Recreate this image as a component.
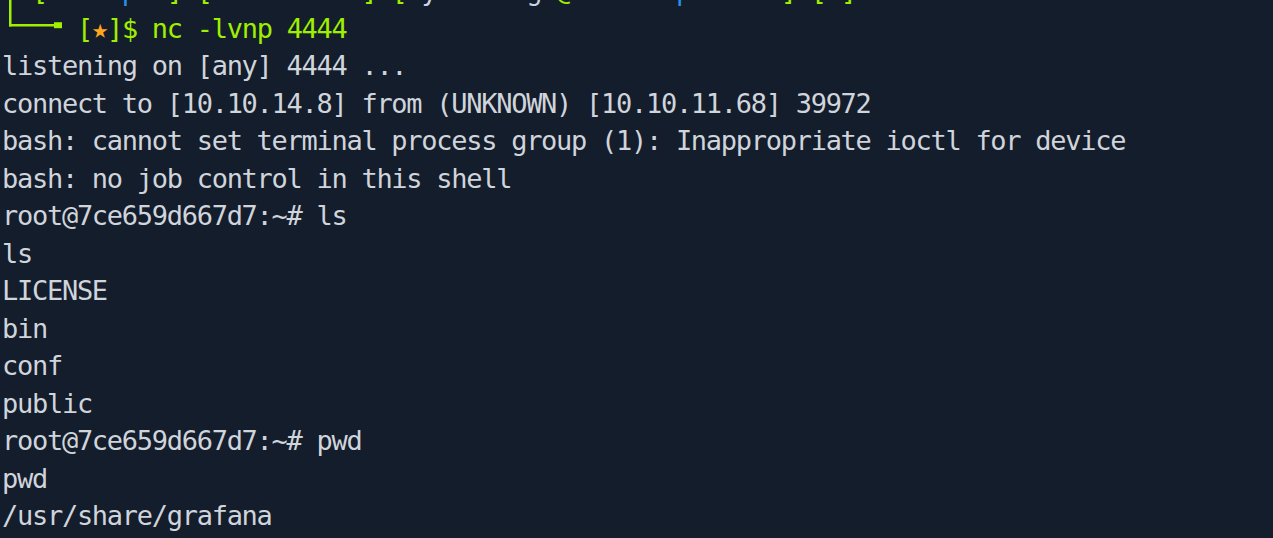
const green = "text-[#9fef00]";
const text = "text-[#d0d4db]";

const lines = [
  "listening on [any] 4444 ...",
  "connect to [10.10.14.8] from (UNKNOWN) [10.10.11.68] 39972",
  "bash: cannot set terminal process group (1): Inappropriate ioctl for device",
  "bash: no job control in this shell",
  "root@7ce659d667d7:~# ls",
  "ls",
  "LICENSE",
  "bin",
  "conf",
  "public",
  "root@7ce659d667d7:~# pwd",
  "pwd",
  "/usr/share/grafana",
];

function Corner() {
  // └──╼ drawn so it joins the prompt line above without gaps
  return (
    <svg
      width="60"
      height="37.5"
      viewBox="0 0 60 37.5"
      className="inline-block align-top overflow-visible"
    >
      <rect x="7" y="-60" width="2.5" height="76.5" fill="#9fef00" />
      <rect x="7" y="14" width="46" height="2.5" fill="#9fef00" />
      <rect x="52" y="12.2" width="8" height="6" fill="#9fef00" />
    </svg>
  );
}

export default function App() {
  return (
    <div className="w-[1273px] h-[538px] overflow-hidden bg-[#141d2b]">
      <div
        className="mt-[-28px] pl-[2px] text-[27px] leading-[37.5px] tracking-[-1.28px] whitespace-pre"
        style={{ fontFamily: '"DejaVu Sans Mono", "Liberation Mono", monospace' }}
      >
        {/* prompt header, mostly scrolled out of view */}
        <div>
          <span className="inline-block w-[30px]" />
          <span className={green}>[</span>
          <span className="text-[#2b8ef0]">us-vip-1</span>
          <span className={green}>]─[</span>
          <span className="text-[#2b8ef0]">10.10.14.8</span>
          <span className={green}>]─[</span>
          <span className="text-[#c9d3e4]">cyberkingz</span>
          <span className={green}>@</span>
          <span className="text-[#2b8ef0]">hackboxparrot1</span>
          <span className={green}>]─[</span>
          <span className={green}>~</span>
          <span className={green}>]</span>
        </div>
        <div>
          <Corner />
          <span className={green}> [</span>
          <span className="text-[#ffa51f]">★</span>
          <span className={green}>]$ nc -lvnp 4444</span>
        </div>
        {lines.map((l, i) => (
          <div key={i} className={text}>
            {l}
          </div>
        ))}
      </div>
    </div>
  );
}
